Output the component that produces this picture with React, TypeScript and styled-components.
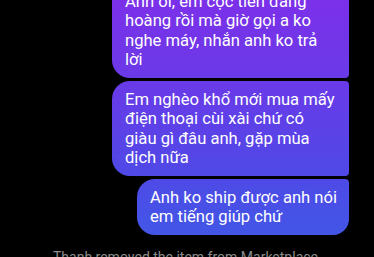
import React from "react";
import styled, { createGlobalStyle } from "styled-components";

const Global = createGlobalStyle`
  html, body { margin: 0; padding: 0; background: #000; overflow: hidden; }
  body { font-family: Roboto, "Noto Sans", sans-serif; }
`;

const Thread = styled.div`
  width: 374px;
  height: 257px;
  overflow: hidden;
  background: #000;
  display: flex;
  flex-direction: column;
  align-items: flex-end;
  padding-right: 25px;
  box-sizing: border-box;
`;

const Group = styled.div`
  margin-top: -17px;
  display: flex;
  flex-direction: column;
  align-items: flex-end;
  gap: 3px;
`;

type Pos = "first" | "middle" | "last";

const Bubble = styled.div<{ $pos: Pos; $w: number }>`
  width: ${(p) => p.$w}px;
  box-sizing: border-box;
  padding: 8.5px 6px 8.5px 13px;
  color: #fff;
  font-size: 16.6px;
  line-height: 19.5px;
  white-space: nowrap;
  background: linear-gradient(180deg, #7b30e9 0px, #6a3ae8 80px, #5048e7 170px, #3d5be6 257px);
  background-attachment: fixed;
  border-radius: ${(p) =>
    p.$pos === "last" ? "18px 4px 16px 18px" : p.$pos === "first" ? "18px 18px 4px 18px" : "18px 4px 4px 18px"};
`;

const Notice = styled.div`
  align-self: stretch;
  margin-right: -25px;
  margin-top: 13px;
  text-align: center;
  color: #8a8a8a;
  font-size: 14px;
  line-height: 18px;
  padding-right: 3px;
`;

const lines = (arr: string[]) =>
  arr.map((l, i) => (
    <React.Fragment key={i}>
      {i > 0 && <br />}
      {l}
    </React.Fragment>
  ));

export default function App() {
  return (
    <>
      <Global />
      <Thread>
        <Group>
          <Bubble $pos="first" $w={237}>
            {lines(["Anh ơi, em cọc tiền đàng", "hoàng rồi mà giờ gọi a ko", "nghe máy, nhắn anh ko trả", "lời"])}
          </Bubble>
          <Bubble $pos="middle" $w={237}>
            {lines(["Em nghèo khổ mới mua mấy", "điện thoại cùi xài chứ có", "giàu gì đâu anh, gặp mùa", "dịch nữa"])}
          </Bubble>
          <Bubble $pos="last" $w={212}>
            {lines(["Anh ko ship được anh nói", "em tiếng giúp chứ"])}
          </Bubble>
        </Group>
        <Notice>Thanh removed the item from Marketplace</Notice>
      </Thread>
    </>
  );
}
